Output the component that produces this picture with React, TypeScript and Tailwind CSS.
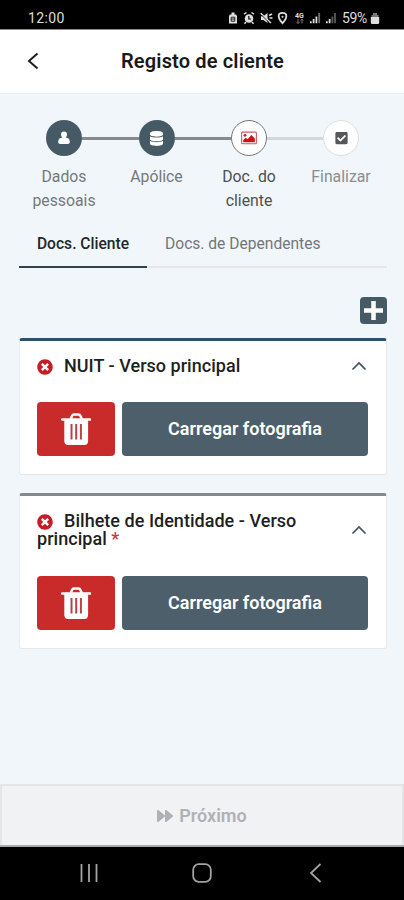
import type { ReactNode } from "react";
import { FaDatabase, FaCheckSquare, FaTimesCircle, FaForward } from "react-icons/fa";

function StatusBar() {
  return (
    <div className="h-[30px] shrink-0 bg-black border-b border-[#8b8b8b] flex items-center justify-between pl-[28px] pr-[24px] pt-[7px] text-[#dedede]">
      <span className="text-[14px] leading-none tracking-[0.4px]">12:00</span>
      <div className="flex items-center">
        <svg width="108" height="14" viewBox="0 0 108 14" fill="none">
          {/* Battery saver */}
          <path d="M2 3.5h1.5V1.5h3v2H8L9 5v7.5H1V5z" fill="#dedede" />
          <path d="M3.2 6.2h3.6v4H3.2zM3.2 8h3.6" stroke="#222" />
          {/* Alarm */}
          <circle cx="21" cy="7.5" r="4.3" fill="#dedede" />
          <path d="m16 3.2 2.5-1.7M26 3.2l-2.5-1.7M18 11l-1.5 1.7M24 11l1.5 1.7" stroke="#dedede" strokeWidth="1.5" />
          <path d="M20.8 5v3H23" stroke="#111" strokeWidth="1.2" />
          {/* Muted */}
          <path d="M33 5.2h2.4L39.5 2v10l-4.1-3.1H33z" fill="#dedede" />
          <path d="M32.7 2.2 43 12M41 4.5l3-1.5M41.5 7h3" stroke="#dedede" strokeWidth="1.5" />
          <path d="m33.5 4 7 7" stroke="#000" strokeWidth=".8" />
          {/* Location */}
          <path d="M54.5 1.8c-5.2 0-5 4.8 0 10.4 5-5.6 5.2-10.4 0-10.4Z" stroke="#dedede" strokeWidth="1.8" />
          <circle cx="54.5" cy="5.8" r="1" fill="#dedede" />
          {/* Signal bars */}
          <path d="M82.8 12.2v-2M85.6 12.2V8M88.4 12.2V5.5" stroke="#dedede" strokeWidth="1.8" />
          <path d="M91.2 12.2V2" stroke="#707070" strokeWidth="1.8" />
          <path d="M98.8 12.2v-2M101.6 12.2V8" stroke="#dedede" strokeWidth="1.8" />
          <path d="M104.4 12.2V5.5M107 12.2V2" stroke="#5a5a5a" strokeWidth="1.8" />
          <text x="67" y="6.5" fill="#dedede" fontSize="7" fontWeight="700">4G</text>
          <path d="M70 8v4.500M68.500 11l1.500 1.500 1.500-1.500M74 12.500V8M72.500 9.500 74 8l1.500 1.500" stroke="#777" />
        </svg>
        <span className="ml-[6px] text-[14px] leading-none tracking-[-0.3px]">59%</span>
        <svg className="ml-[3px]" width="10" height="13" viewBox="0 0 10 13" fill="#dedede">
          <path d="M3 1h4v2h1.5v2h-7V3H3z" fill="#777" />
          <path d="M.8 5h8.4v5.5A1.5 1.5 0 0 1 7.7 12H2.3a1.5 1.5 0 0 1-1.5-1.5z" />
        </svg>
      </div>
    </div>
  );
}

function UserIcon() {
  return (
    <svg width="12" height="14" viewBox="0 0 12 14" fill="#fff">
      <path d="M6 .5a3 3 0 0 0-3 3.1c0 1.2.5 2.3 1.3 2.900C1.500 6.900.2 8.300.2 10.800c0 1.400.7 2.100 1.900 2.100h7.800c1.200 0 1.900-.7 1.900-2.100 0-2.500-1.300-3.900-4.100-4.300.8-.6 1.300-1.700 1.300-2.900A3 3 0 0 0 6 .5Z" />
    </svg>
  );
}

function PictureIcon() {
  return (
    <svg width="16" height="14" viewBox="0 0 16 14">
      <rect x=".6" y="1.1" width="14.8" height="11.6" rx="1" fill="#fff" stroke="#cb5b62" strokeWidth="1.1" />
      <circle cx="4" cy="4.3" r="1.4" fill="#c71f28" />
      <path d="M2.2 11.3V9.1L4.8 6.7 6.5 8.3l4-4.4 3.3 3.5v3.9z" fill="#c9141d" />
    </svg>
  );
}

function TrashIcon() {
  return (
    <svg width="30" height="34" viewBox="0 0 30 34" fill="none">
      <path d="M1.200 7.500h28" stroke="#fff" strokeWidth="2.600" strokeLinecap="round" />
      <path d="M9.700 7 11 4q.6-1.500 2-1.500h4.500q1.400 0 2 1.500l1.300 3" stroke="#fff" strokeWidth="2.500" />
      <path d="M3.300 8h23.800v20.800q0 4.200-3.800 4.200H7.100q-3.800 0-3.800-4.200z" fill="#fff" />
      <path d="M10.500 12v15.500M15.200 12v15.500M19.900 12v15.500" stroke="#b8434a" strokeWidth="2" />
    </svg>
  );
}

function Chevron() {
  return (
    <svg className="shrink-0" width="16" height="10" viewBox="0 0 16 10" fill="none" stroke="#41535c" strokeWidth="1.7">
      <path d="m1.500 8.500 6.500-6.500 6.500 6.500" />
    </svg>
  );
}

const steps = [
  {
    label: "Dados pessoais",
    icon: <UserIcon />,
    circle: "bg-[#465a66]",
    text: "text-[#74797d]",
    line: "bg-[#87898b]",
  },
  {
    label: "Apólice",
    icon: <FaDatabase className="w-[13px] h-[15px] text-white" />,
    circle: "bg-[#465a66]",
    text: "text-[#74797d]",
    line: "bg-[#87898b]",
  },
  {
    label: "Doc. do cliente",
    icon: <PictureIcon />,
    circle: "bg-white border border-[#73777a]",
    text: "text-[#4c5053]",
    line: "bg-[#d4d6d8]",
  },
  {
    label: "Finalizar",
    icon: <FaCheckSquare className="w-[13px] h-[14px] text-[#55585a]" />,
    circle: "bg-white border border-[#dcdfe1]",
    text: "text-[#898e92]",
    line: "",
  },
];

function Stepper() {
  return (
    <div className="grid grid-cols-[92px_93px_92px_92px] h-[92px]">
      {steps.map((step, idx) => (
        <div key={idx} className="flex flex-col items-center">
          <div className="w-full flex items-center">
            <div className={`flex-1 h-[3px] ${idx > 0 ? steps[idx - 1].line : ""}`} />
            <div className={`w-9 h-9 rounded-full flex items-center justify-center ${step.circle}`}>
              {step.icon}
            </div>
            <div className={`flex-1 h-[3px] ${step.line}`} />
          </div>
          <p className={`mt-[9px] w-[72px] text-center text-[15.8px] leading-[24px] ${step.text}`}>
            {step.label}
          </p>
        </div>
      ))}
    </div>
  );
}

function DocCard({ title, border, className }: { title: ReactNode; border: string; className: string }) {
  return (
    <div
      className={`bg-white rounded-[3px] border-x border-b border-x-[#e8ecef] border-b-[#e4e7e9] border-t-[3px] pl-[17px] pr-[18px] pb-[18px] pt-[16px] flex flex-col justify-between ${border} ${className}`}
    >
      <div className="flex items-center justify-between pr-[1px]">
        <h3 className="w-[285px] text-[18px] leading-[18px] tracking-[0.03px] font-medium text-[#1d1f21]">
          <FaTimesCircle className="inline-block w-4 h-4 mr-[11px] align-[-3px] text-[#c51d27]" />
          {title}
        </h3>
        <Chevron />
      </div>
      <div className="flex gap-[7px]">
        <button className="w-[78px] h-[54px] rounded-[4px] bg-[#c92a2a] flex items-center justify-center">
          <TrashIcon />
        </button>
        <button className="flex-1 h-[54px] pb-[1px] rounded-[4px] bg-[#4d5f6b] text-white text-[18px] font-semibold">
          Carregar fotografia
        </button>
      </div>
    </div>
  );
}

export default function App() {
  return (
    <div className="w-full h-[900px] flex flex-col bg-[#f1f6fa] font-['Roboto',sans-serif] overflow-hidden">
      <StatusBar />

      {/* Header */}
      <header className="h-[63px] shrink-0 bg-white flex items-center pl-[27px] pb-[2px]">
        <svg width="12" height="18" viewBox="0 0 12 18" fill="none" stroke="#1c1c1c" strokeWidth="2">
          <path d="M10.500 1.500 2 9l8.500 7.500" />
        </svg>
        <h1 className="ml-[82px] text-[20px] leading-none tracking-[0.15px] font-semibold text-[#191919] whitespace-nowrap">
          Registo de cliente
        </h1>
      </header>

      <main className="flex-1 pt-[26px] pl-[18px] pr-[17px] border-t border-[#e9eef2]">
        <Stepper />

        {/* Tabs */}
        <div className="ml-[1px] mt-[9px] h-[47px] flex text-[15.6px] whitespace-nowrap">
          <div className="w-[128px] flex items-center justify-center pt-[3px] border-b-2 border-[#30424d] text-[#222628] text-[15.6px] font-medium">
            Docs. Cliente
          </div>
          <div className="flex-1 flex items-center pl-[18px] pt-[3px] border-b-2 border-[#e5e8ea] text-[#71767a]">
            Docs. de Dependentes
          </div>
        </div>

        <div className="mt-[29px] flex justify-end">
          <div className="w-[27px] h-[27px] rounded-[4px] bg-[#465a66] flex items-center justify-center">
            <svg width="19" height="19" viewBox="0 0 19 19" stroke="#fff" strokeWidth="4.500">
              <path d="M0 9.500h19M9.500 0v19" />
            </svg>
          </div>
        </div>

        {/* Documents */}
        <div className="mt-[14px] ml-[1px] space-y-[18px]">
          <DocCard title="NUIT - Verso principal" border="border-t-[#2e5165]" className="h-[137px]" />
          <DocCard
            title={<>Bilhete de Identidade - Verso principal <span className="text-[#c83840]">*</span></>}
            border="border-t-[#84898c]"
            className="h-[156px]"
          />
        </div>
      </main>

      {/* Next */}
      <button className="h-[61px] shrink-0 bg-[#f1f2f4] border-2 border-b-0 border-[#e3e5e7] flex items-center justify-center gap-[6px] text-[18px] font-semibold text-[#aeb2b6]">
        <FaForward className="w-[16px] h-[16px]" />
        Próximo
      </button>

      {/* System navigation */}
      <nav className="h-[55px] shrink-0 bg-black border-t-2 border-[#aaa] flex items-center pl-[80px] pb-[2px] text-[#a3a3a3]">
        <svg width="18" height="18" viewBox="0 0 18 18" stroke="currentColor" strokeWidth="1.800">
          <path d="M1.500 0v18M9 0v18M16.500 0v18" />
        </svg>
        <svg className="ml-[94px]" width="20" height="20" viewBox="0 0 20 20" fill="none" stroke="currentColor" strokeWidth="1.800">
          <rect x="1.200" y="1.200" width="17.600" height="17.600" rx="5.500" />
        </svg>
        <svg className="ml-[97px]" width="14" height="20" viewBox="0 0 14 20" fill="none" stroke="currentColor" strokeWidth="1.800">
          <path d="M11.500 1 2 10l9.500 9" />
        </svg>
      </nav>
    </div>
  );
}
